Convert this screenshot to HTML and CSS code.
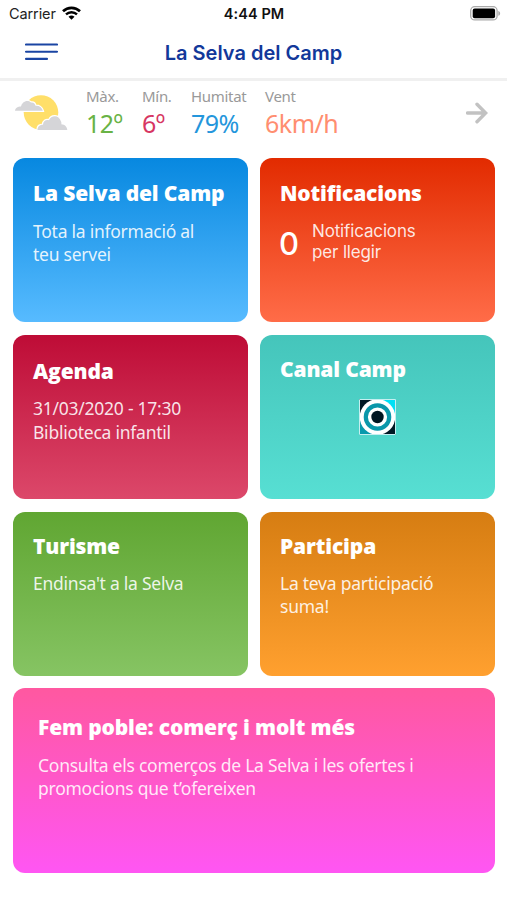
FILE: index.html
```html
<!DOCTYPE html>
<html lang="ca">
<head>
<meta charset="utf-8">
<title>La Selva del Camp</title>
<link rel="stylesheet" href="styles.css">
</head>
<body>
<div class="status">
  <div class="carrier"><span>Carrier</span>
    <svg width="19" height="14" viewBox="0 0 19 14"><path d="M1 5.2a12.3 12.3 0 0 1 17 0" fill="none" stroke="#000" stroke-width="2.7"/><path d="M4 8.4a8 8 0 0 1 11 0" fill="none" stroke="#000" stroke-width="2.4"/><path d="M6.5 10.8a4.4 4.4 0 0 1 6 0L9.5 13.8z"/></svg>
  </div>
  <div class="time">4:44 PM</div>
  <svg class="battery" width="31" height="15" viewBox="0 0 31 15"><rect x=".7" y=".7" width="26.4" height="13.2" rx="4" fill="#fff" stroke="#aaa" stroke-width="1.3"/><rect x="2.7" y="2.6" width="22.4" height="9.6" rx="2"/><path d="M28.3 5c2.4.6 2.4 4.2 0 4.8z" fill="#aaa"/></svg>
</div>
<header class="header">
  <svg class="menu" width="33" height="18" viewBox="0 0 33 18"><path d="M1 1.5h31M1 8.7h31M1 15.9h21" stroke="#1a45a3" stroke-width="2.1" stroke-linecap="round"/></svg>
  <h1>La Selva del Camp</h1>
</header>
<section class="weather">
  <svg class="sky" width="53" height="36" viewBox="0 0 53 36"><circle cx="26" cy="17.5" r="17.3" fill="#ffdf69"/><path d="M0 15.700C.5 12.500 3 11.500 6 11.500C7 7 12 4 16 7.500C18.500 7 20 8.500 20.500 10.800C24 10.500 27 12.500 27.800 15.700z" fill="#d5d5d8" stroke="#fff" stroke-width="2.400" paint-order="stroke"/><path d="M22.500 35C22.500 31.500 25 29.800 28 29.800C28 26 31 24.500 34 25.300C36 20 44 19.500 46 26.500C46.500 27.500 46.500 28.500 46.300 29.300C50 29.500 52 32 52.300 35z" fill="#d5d5d8" stroke="#fff" stroke-width="2.400" paint-order="stroke"/></svg>
  <div class="stat max"><span>Màx.</span><strong>12º</strong></div>
  <div class="stat min"><span>Mín.</span><strong>6º</strong></div>
  <div class="stat humidity"><span>Humitat</span><strong>79%</strong></div>
  <div class="stat wind"><span>Vent</span><strong>6km/h</strong></div>
  <svg class="arrow" width="22" height="22" viewBox="0 0 22 22"><path d="M1.500 11h17.500M11 2.300l8.700 8.700l-8.700 8.700" fill="none" stroke="#c2c2c2" stroke-width="3.400" stroke-linecap="round"/></svg>
</section>
<main class="cards">
  <article class="card selva"><h2>La Selva del Camp</h2><p>Tota la informació al<br>teu servei</p></article>
  <article class="card notify"><h2>Notificacions</h2><div class="unread"><b>0</b><span>Notificacions<br>per llegir</span></div></article>
  <article class="card agenda"><h2>Agenda</h2><p>31/03/2020 - 17:30<br>Biblioteca infantil</p></article>
  <article class="card canal"><h2>Canal Camp</h2>
    <svg class="channel" width="37" height="36" viewBox="0 0 37 36"><path fill="#001824" d="M0 0h37v36H0z"/><path fill="#00e0f5" d="M18.500 0H37v18H18.500z"/><path fill="#0899ac" d="M0 18h18.500v18H0z"/><circle cx="18.500" cy="18" r="17.800" fill="#fff"/><circle cx="18.500" cy="18" r="11.700" fill="none" stroke="#0a97aa" stroke-width="4.200"/><circle cx="18.500" cy="18" r="6.200" fill="#001521"/><path d="M.5.500h36v35H.5z" fill="none" stroke="#c5eff0" stroke-width="1"/></svg>
  </article>
  <article class="card turisme"><h2>Turisme</h2><p>Endinsa't a la Selva</p></article>
  <article class="card participa"><h2>Participa</h2><p>La teva participació<br>suma!</p></article>
  <article class="card poble"><h2>Fem poble: comerç i molt més</h2><p>Consulta els comerços de La Selva i les ofertes i<br>promocions que t’ofereixen</p></article>
</main>
</body>
</html>
```
FILE: styles.css
```css
* { box-sizing: border-box; }
body { margin: 0; background: #fff; font-family: "Open Sans", "Noto Sans", sans-serif; width: 507px; height: 900px; overflow: hidden; }
h1, h2, p { margin: 0; font-weight: 400; white-space: nowrap; }
svg { display: block; flex: none; }
.status { height: 28px; display: grid; grid-template-columns: 1fr auto 1fr; align-items: center; padding: 0 6px 0 9px; font-family: Inter, sans-serif; font-size: 14.5px; color: #222; }
.carrier { display: flex; align-items: center; gap: 6px; }
.carrier svg { margin-top: -2px; }
.carrier span { letter-spacing: -.1px; margin-top: -1px; }
.time { font-weight: 600; color: #111; margin-left: -2px; margin-top: -1px; letter-spacing: .1px; }
.battery { justify-self: end; margin-top: -2px; }
.header { height: 53px; border-bottom: 3px solid #f0f0f0; display: grid; grid-template-columns: 140px 1fr 140px; align-items: center; padding-bottom: 3px; }
.menu { margin-left: 25px; margin-top: 0; }
.header h1 { text-align: center; font: 600 20px/26px Inter, sans-serif; color: #12389a; margin-top: 2px; }
.weather { height: 77px; display: flex; padding: 5px 19px 0 15px; }
.sky { margin-top: 9px; margin-right: 18px; }
.stat { display: flex; flex-direction: column; white-space: nowrap; }
.stat span { font-family: "Noto Sans", sans-serif; font-size: 15px; line-height: 20px; color: #999; letter-spacing: -.3px; }
.stat strong { font-family: "Noto Sans", sans-serif; font-size: 25px; line-height: 35px; font-weight: 400; letter-spacing: -.5px; }
.max { width: 56px; }
.min { width: 49px; }
.humidity { width: 74px; }
.max strong { color: #69b345; }
.min strong { color: #d73662; }
.humidity strong { color: #2496dc; }
.wind strong { color: #ff8e70; }
.arrow { margin-left: auto; margin-top: 16px; }
.cards { display: grid; grid-template-columns: 235px 235px; grid-template-rows: 164px 164px 164px 184.500px; column-gap: 12px; row-gap: 12.800px; padding-left: 13px; }
.card { border-radius: 12px; padding: 20px 20px 0; color: #fff; }
.card h2 { font-size: 21px; line-height: 28px; font-weight: 800; letter-spacing: -.15px; }
.card p { font-family: "Noto Sans", sans-serif; font-size: 17.500px; line-height: 23.300px; margin-top: 12.500px; color: rgba(255, 255, 255, .88); font-weight: 400; letter-spacing: -.25px; }
.selva { background: linear-gradient(#0788e0, #57bbff); }
.notify { background: linear-gradient(#e22b00, #ff6c48); }
.selva, .notify { padding-top: 21px; }
.agenda { background: linear-gradient(#be0c36, #dc486a); padding-top: 22px; }
.canal { background: linear-gradient(#45c5bb, #57dfd3); }
.turisme { background: linear-gradient(#60a632, #86c463); }
.turisme p { margin-top: 12px; }
.participa p { margin-top: 12.500px; }
.participa { background: linear-gradient(#d67d12, #ffa02f); }
.poble { grid-column: 1 / 3; background: linear-gradient(#ff58a0, #ff56f3); padding: 25px 25px 0; }
.unread { display: flex; margin-top: 14px; font-family: Inter, sans-serif; color: rgba(255, 255, 255, .88); }
.unread b { width: 32px; font-size: 31px; line-height: 46px; font-weight: 500; color: #fff; margin-left: -1px; margin-right: 1px; }
.unread span { font-size: 17px; line-height: 20.500px; white-space: nowrap; letter-spacing: -.15px; }
.channel { margin: 16px 0 0 79px; }
```
